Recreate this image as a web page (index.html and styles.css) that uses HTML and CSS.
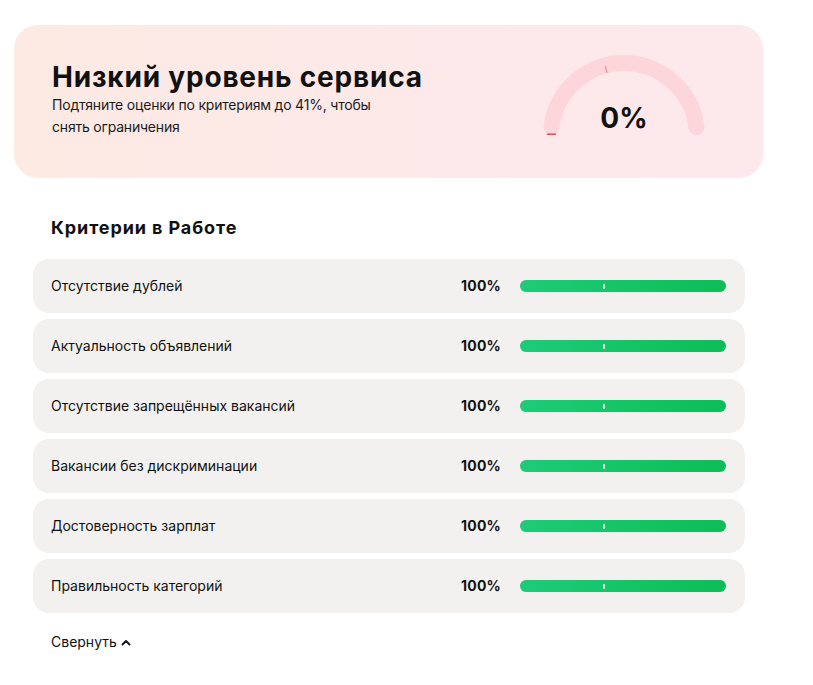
FILE: index.html
```html
<!DOCTYPE html>
<html lang="ru">
<head>
    <meta charset="UTF-8">
    <meta name="viewport" content="width=device-width, initial-scale=1.0">
    <title>Уровень сервиса</title>
    <link rel="stylesheet" href="styles.css">
</head>
<body>
    <div class="page">
        <!-- Service level banner -->
        <div class="level-card">
            <div class="level-text">
                <h1 class="level-title">Низкий уровень сервиса</h1>
                <p class="level-hint">Подтяните оценки по критериям до 41%, чтобы снять ограничения</p>
            </div>
            <svg class="gauge" width="170" height="96" viewBox="0 0 170 96">
                <path d="M12.55 75.1 A73 73 0 0 1 157.45 75.1" fill="none" stroke="#fdd6db" stroke-width="16" stroke-linecap="round"/>
                <line x1="67.9" y1="20.3" x2="66.4" y2="14.5" stroke="#ec9aa7" stroke-width="1.5" stroke-linecap="round"/>
                <line x1="8.5" y1="82.3" x2="16.5" y2="82.3" stroke="#d94f66" stroke-width="1.6" stroke-linecap="round"/>
                <text x="85" y="76" text-anchor="middle" class="gauge-value">0%</text>
            </svg>
        </div>

        <div class="criteria">
            <h2 class="criteria-title">Критерии в Работе</h2>

            <div class="criteria-list">
                <div class="criterion">
                    <span class="criterion-name">Отсутствие дублей</span>
                    <span class="criterion-value">100%</span>
                    <div class="bar"><div class="bar-fill" style="width: 100%"></div><span class="bar-mark"></span></div>
                </div>
                <div class="criterion">
                    <span class="criterion-name">Актуальность объявлений</span>
                    <span class="criterion-value">100%</span>
                    <div class="bar"><div class="bar-fill" style="width: 100%"></div><span class="bar-mark"></span></div>
                </div>
                <div class="criterion">
                    <span class="criterion-name">Отсутствие запрещённых вакансий</span>
                    <span class="criterion-value">100%</span>
                    <div class="bar"><div class="bar-fill" style="width: 100%"></div><span class="bar-mark"></span></div>
                </div>
                <div class="criterion">
                    <span class="criterion-name">Вакансии без дискриминации</span>
                    <span class="criterion-value">100%</span>
                    <div class="bar"><div class="bar-fill" style="width: 100%"></div><span class="bar-mark"></span></div>
                </div>
                <div class="criterion">
                    <span class="criterion-name">Достоверность зарплат</span>
                    <span class="criterion-value">100%</span>
                    <div class="bar"><div class="bar-fill" style="width: 100%"></div><span class="bar-mark"></span></div>
                </div>
                <div class="criterion">
                    <span class="criterion-name">Правильность категорий</span>
                    <span class="criterion-value">100%</span>
                    <div class="bar"><div class="bar-fill" style="width: 100%"></div><span class="bar-mark"></span></div>
                </div>
            </div>

            <div class="collapse">
                Свернуть
                <svg width="10" height="7" viewBox="0 0 10 7"><path d="M1.5 5.5 L5 2 L8.5 5.5" fill="none" stroke="#111" stroke-width="1.8" stroke-linecap="round" stroke-linejoin="round"/></svg>
            </div>
        </div>
    </div>
</body>
</html>
```

FILE: styles.css
```css
body {
    margin: 0;
    background-color: #ffffff;
    font-family: 'Inter', 'Noto Sans', sans-serif;
    color: #111111;
}
.page {
    width: 749px;
    padding: 25px 0 30px 14px;
}
.level-card {
    display: flex;
    justify-content: space-between;
    align-items: flex-start;
    height: 153px;
    box-sizing: border-box;
    padding: 27px 54px 0 38px;
    border-radius: 24px;
    background: linear-gradient(90deg, #fdeae3 0%, #fde9e9 55%, #fde8ec 100%);
}
.level-title {
    margin: 8px 0 0;
    font-size: 28px;
    line-height: 34px;
    font-weight: 700;
    letter-spacing: 0.8px;
}
.level-hint {
    width: 330px;
    margin: 0;
    font-size: 14px;
    line-height: 22px;
    letter-spacing: -0.2px;
    color: #1c1c1c;
}
.gauge {
    display: block;
}
.gauge-value {
    font-family: 'Inter', 'Noto Sans', sans-serif;
    font-size: 28px;
    font-weight: 700;
    fill: #111111;
}
.criteria {
    padding: 0 18px 0 19px;
}
.criteria-title {
    margin: 37px 0 0 18px;
    font-size: 18px;
    line-height: 26px;
    font-weight: 700;
    letter-spacing: 0.9px;
}
.criteria-list {
    display: flex;
    flex-direction: column;
    gap: 6px;
    margin-top: 18px;
}
.criterion {
    display: flex;
    align-items: center;
    height: 54px;
    padding: 0 19px 0 18px;
    border-radius: 16px;
    background-color: #f3f1ef;
}
.criterion-name {
    flex: 1;
    font-size: 14px;
    margin-top: -1px;
}
.criterion-value {
    margin-right: 19px;
    margin-top: -1px;
    font-size: 14px;
    font-weight: 700;
    letter-spacing: 0.2px;
}
.bar {
    position: relative;
    width: 206px;
    height: 12px;
    border-radius: 6px;
    background-color: #e2e0de;
}
.bar-fill {
    height: 100%;
    border-radius: 6px;
    background: linear-gradient(90deg, #1ecb78 0%, #14c566 50%, #0dbd57 100%);
}
.bar-mark {
    position: absolute;
    left: 83px;
    top: 4px;
    width: 2px;
    height: 5px;
    border-radius: 1px;
    background-color: #e9fbf0;
}
.collapse {
    display: flex;
    align-items: center;
    gap: 4px;
    margin: 20px 0 0 18px;
    font-size: 14px;
    cursor: pointer;
}
.collapse svg {
    margin-top: 1px;
}
```
